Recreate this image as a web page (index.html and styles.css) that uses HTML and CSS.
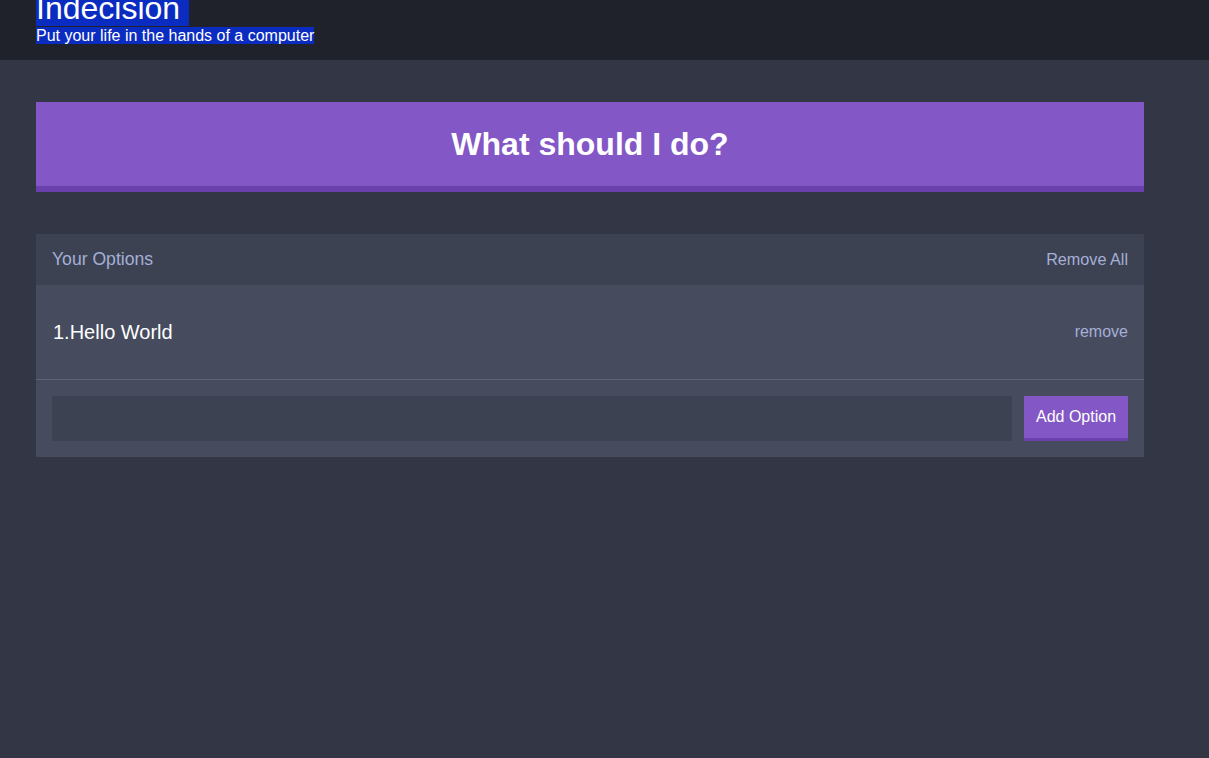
FILE: index.html
```html
<!DOCTYPE html>
<html>
<head>
<meta charset="utf-8">
<link rel="stylesheet" href="styles.css">
</head>
<body>
<header class="header">
  <div class="container">
    <h1 class="header-title"><span class="sel">Indecision&nbsp;</span></h1>
    <h2 class="header-subtitle"><span class="sel">Put your life in the hands of a computer</span></h2>
  </div>
</header>
<main class="container">
  <button class="big-button">What should I do?</button>
  <section class="widget">
    <div class="widget-header">
      <h3 class="widget-header-title">Your Options</h3>
      <button class="link-button">Remove All</button>
    </div>
    <div class="option">
      <p class="option-text">1.Hello World</p>
      <button class="link-button">remove</button>
    </div>
    <form class="add-option">
      <input class="add-option-input" type="text" name="option">
      <button class="button" type="button">Add Option</button>
    </form>
  </section>
</main>
</body>
</html>
```
FILE: styles.css
```css
* { box-sizing: border-box; }
html, body { margin: 0; padding: 0; }
body {
  background: #333745;
  font-family: "Liberation Sans", Arial, sans-serif;
  color: #fff;
  min-height: 758px;
}
.container {
  width: 1108px;
  margin-left: 36px;
}
.header {
  background: #20222b;
  height: 60px;
  overflow: hidden;
}
.header-title {
  margin: -10px 0 0 0;
  font-size: 32px;
  font-weight: normal;
  line-height: 37px;
}
.header-subtitle {
  margin: 0;
  font-size: 16px;
  font-weight: normal;
  line-height: 17px;
  color: #fff;
}
.sel { background: #0b2cc0; }
.big-button {
  display: block;
  width: 100%;
  margin: 42px 0 42px;
  height: 90px;
  padding: 0;
  background: #8357c5;
  border: none;
  border-bottom: 6px solid #6a40ad;
  color: #fff;
  font-family: inherit;
  font-size: 32px;
  font-weight: bold;
}
.widget {
  background: #464b5e;
}
.widget-header {
  background: #3c4251;
  height: 51px;
  display: flex;
  align-items: center;
  justify-content: space-between;
  padding: 0 16px;
}
.widget-header-title {
  margin: 0;
  font-size: 17.6px;
  font-weight: normal;
  color: #a5afd7;
}
.link-button {
  background: none;
  border: none;
  padding: 0;
  color: #a5afd7;
  font-family: inherit;
  font-size: 16px;
}
.widget-header .link-button { font-size: 16.2px; }
.option {
  display: flex;
  align-items: center;
  justify-content: space-between;
  height: 95px;
  padding: 0 16px 0 17px;
  border-bottom: 1px solid #5f6478;
}
.option-text {
  margin: 0;
  font-size: 20px;
  color: #fff;
}
.add-option {
  display: flex;
  gap: 12px;
  padding: 16px;
  margin: 0;
}
.add-option-input {
  flex: 1;
  height: 45px;
  background: #3c4251;
  border: none;
  outline: none;
  color: #fff;
  font-family: inherit;
  font-size: 16px;
}
.button {
  width: 104px;
  height: 45px;
  background: #8357c5;
  border: none;
  border-bottom: 3px solid #6a40ad;
  color: #fff;
  font-family: inherit;
  font-size: 16px;
  padding: 0;
}
```
